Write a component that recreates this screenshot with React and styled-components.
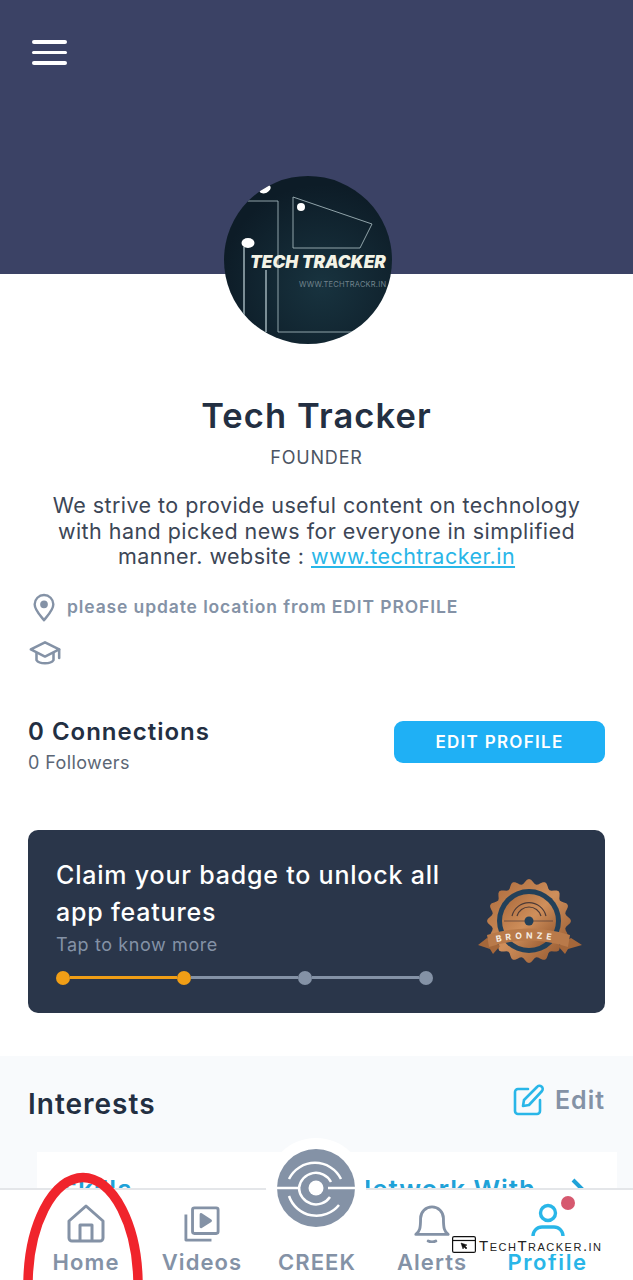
import React from "react";
import styled, { createGlobalStyle } from "styled-components";

const GlobalStyle = createGlobalStyle`
  html, body { margin: 0; padding: 0; background: #fff; }
  * { box-sizing: border-box; }
`;

const Page = styled.div`
  position: relative;
  width: 633px;
  height: 1280px;
  overflow: hidden;
  background: #fff;
  font-family: Inter, "Open Sans", sans-serif;
  color: #232f42;
`;

const Banner = styled.div`
  height: 274px;
  background: #3b4265;
  padding: 40px 32px;
`;

const Burger = styled.div`
  width: 35px;
  display: flex;
  flex-direction: column;
  gap: 7px;
  span {
    height: 3.5px;
    border-radius: 2px;
    background: #fff;
  }
`;

const AvatarWrap = styled.div`
  width: 168px;
  height: 168px;
  margin: -98px 0 0 224px;
  border-radius: 50%;
  overflow: hidden;
  position: relative;
`;

const Name = styled.h1`
  margin: 49px 0 0;
  font-size: 34.5px;
  line-height: 46px;
  font-weight: 600;
  letter-spacing: 1.1px;
  text-align: center;
  color: #232f42;
`;

const Role = styled.div`
  margin-top: 8px;
  font-size: 18px;
  line-height: 22px;
  letter-spacing: 0.8px;
  text-align: center;
  color: #4b5563;
`;

const Bio = styled.p`
  margin: 24px auto 0;
  width: 545px;
  font-size: 21.5px;
  line-height: 25.5px;
  letter-spacing: 0.45px;
  text-align: center;
  color: #3c4656;
  a { color: #29b6e8; }
`;

const InfoRow = styled.div`
  display: flex;
  align-items: center;
  gap: 7px;
  height: 30px;
  margin: ${(p) => p.$top}px 0 0 28px;
  font-size: 17.5px;
  font-weight: 600;
  letter-spacing: 0.88px;
  color: #8492a6;
`;

const StatsRow = styled.div`
  display: flex;
  justify-content: space-between;
  align-items: flex-start;
  margin: 49px 28px 0;
`;

const Connections = styled.div`
  font-size: 24px;
  line-height: 30px;
  font-weight: 600;
  letter-spacing: 1px;
  color: #232f42;
`;

const Followers = styled.div`
  margin-top: 5px;
  font-size: 18px;
  line-height: 22px;
  letter-spacing: 0.4px;
  color: #5b6675;
`;

const EditButton = styled.button`
  width: 211px;
  height: 42px;
  margin-top: 4px;
  border: none;
  border-radius: 9px;
  background: #1fb0f5;
  color: #fff;
  font-family: inherit;
  font-size: 17px;
  font-weight: 600;
  letter-spacing: 1.3px;
`;

const BadgeCard = styled.div`
  display: flex;
  justify-content: space-between;
  margin: 56px 28px 0;
  height: 183px;
  padding: 27px 23px 0 28px;
  border-radius: 10px;
  background: #2a364a;
`;

const BadgeTitle = styled.div`
  width: 410px;
  font-size: 25px;
  line-height: 37px;
  font-weight: 500;
  letter-spacing: 0.8px;
  color: #fff;
`;

const BadgeHint = styled.div`
  margin-top: 3px;
  font-size: 18px;
  line-height: 22px;
  letter-spacing: 0.6px;
  color: #8492a6;
`;

const Progress = styled.div`
  display: flex;
  align-items: center;
  width: 377px;
  margin-top: 15px;
`;

const Dot = styled.span`
  width: 14px;
  height: 14px;
  flex: none;
  border-radius: 50%;
  background: ${(p) => (p.$done ? "#f09e16" : "#8492a6")};
`;

const Line = styled.span`
  flex: 1;
  height: 3px;
  background: ${(p) => (p.$done ? "#f09e16" : "#8492a6")};
`;

const BadgeSlot = styled.div`
  margin-top: 21px;
`;

const Interests = styled.section`
  margin-top: 43px;
  height: 240px;
  padding: 0 28px;
  background: #f8fafc;
`;

const InterestsHead = styled.div`
  display: flex;
  justify-content: space-between;
  align-items: center;
  padding-top: 14px;
  height: 82px;
`;

const InterestsTitle = styled.h2`
  margin: 0;
  font-size: 28px;
  font-weight: 600;
  letter-spacing: 1px;
  color: #232f42;
`;

const EditLink = styled.div`
  display: flex;
  align-items: center;
  gap: 10px;
  margin-top: -7px;
  font-size: 25px;
  font-weight: 600;
  letter-spacing: 1px;
  color: #8492a6;
`;

const InterestTabs = styled.div`
  display: flex;
  align-items: flex-start;
  margin: 14px -12px 0 9px;
  height: 80px;
  padding: 23px 27px 0 23px;
  background: #fff;
  font-size: 26px;
  line-height: 30px;
  font-weight: 600;
  letter-spacing: 1px;
  color: #1fa2d8;
`;

const NetworkTab = styled.span`
  margin-left: auto;
  margin-right: 34px;
`;

const Chevron = styled.svg`
  margin-top: 2px;
`;

const BottomNav = styled.nav`
  position: absolute;
  left: 0;
  right: 0;
  bottom: 0;
  height: 92px;
  display: grid;
  grid-template-columns: 116px 116px 114px 116px 115px;
  padding: 0 0 0 28px;
  background: #fff;
  border-top: 2px solid #e4e6e9;
`;

const NavItem = styled.div`
  display: flex;
  flex-direction: column;
  align-items: center;
  justify-content: flex-end;
  gap: 6px;
  height: 85px;
  font-size: 22px;
  line-height: 26px;
  font-weight: 600;
  letter-spacing: ${(p) => (p.$active ? "1.6px" : "1.1px")};
  color: ${(p) => (p.$active ? "#29b6e8" : "#8492a6")};
`;

const CreekBump = styled.div`
  position: absolute;
  left: 266px;
  top: -52px;
  width: 100px;
  height: 100px;
  border-radius: 50%;
  background: #fff;
  display: flex;
  align-items: center;
  justify-content: center;
`;

const Notice = styled.span`
  position: absolute;
  left: 561px;
  top: 6px;
  width: 14px;
  height: 14px;
  border-radius: 50%;
  background: #d6596f;
`;

const Ring = styled.svg`
  position: absolute;
  left: 18px;
  top: 1168px;
`;

const Watermark = styled.div`
  position: absolute;
  left: 452px;
  top: 1236px;
  height: 17px;
  display: flex;
  align-items: center;
  gap: 3px;
  font-family: "Liberation Sans", sans-serif;
  font-size: 15px;
  line-height: 17px;
  font-variant: small-caps;
  letter-spacing: 1.5px;
  color: #222;
`;

const WatermarkText = styled.span`
  padding-top: 1px;
  background: #fff;
`;

const CreekLogo = ({ size, color = "#8492a6" }) => (
  <svg width={size} height={size} viewBox="-39 -39 78 78">
    <circle r="39" fill={color} />
    <g fill="none" stroke="#fff" strokeWidth="2.500">
      <path d="M-27 -9A29 29 0 0 1 25 -9" />
      <path d="M-27 8A29 29 0 0 0 23 17" />
      <path d="M-39 0H-17A17 17 0 0 1 15 -6" />
      <path d="M-17 0A17 17 0 0 0 14 9" />
      <path d="M12 0H39" />
    </g>
    <circle r="7.500" fill="#fff" />
  </svg>
);

const Avatar = () => (
  <svg width="168" height="168" viewBox="0 0 168 168">
    <defs>
      <radialGradient id="bg" cx="58%" cy="65%" r="60%">
        <stop offset="0" stopColor="#18333f" />
        <stop offset="1" stopColor="#0d1c27" />
      </radialGradient>
    </defs>
    <rect width="168" height="168" fill="url(#bg)" />
    <g fill="none" stroke="#9fb2b8" strokeWidth="0.9">
      <path d="M24 25H54V156H144" />
      <path d="M20 71V147" strokeWidth="1.500" />
      <path d="M42 94V156" strokeWidth="1.500" />
      <path d="M69 72V21L148 48L136 72Z" />
    </g>
    <g fill="#fff">
      <ellipse cx="41" cy="13" rx="6" ry="4" transform="rotate(-25 41 13)" />
      <circle cx="77" cy="31" r="4" />
      <ellipse cx="24" cy="67" rx="6.500" ry="5" />
    </g>
    <text
      x="26"
      y="92"
      fontFamily="Inter, sans-serif"
      fontSize="17.2"
      fontWeight="900"
      fontStyle="italic"
      fill="#f3f3e6"
    >
      TECH TRACKER
    </text>
    <text x="75" y="111" fontFamily="Inter, sans-serif" fontSize="7.500" letterSpacing="0.2" fill="#71838c">
      WWW.TECHTRACKR.IN
    </text>
  </svg>
);

// wavy seal outline around the badge centre
const sealPoints = Array.from({ length: 128 }, (_, i) => {
  const a = (i / 128) * Math.PI * 2;
  const r = 39.5 + 2.5 * Math.cos(a * 16);
  return `${51 + r * Math.cos(a)},${43 + r * Math.sin(a)}`;
}).join(" ");

const BronzeBadge = () => (
  <svg width="104" height="88" viewBox="0 0 104 88">
    <defs>
      <linearGradient id="bronze" x1="0" y1="0" x2="1" y2="1">
        <stop offset="0" stopColor="#a9683a" />
        <stop offset="0.5" stopColor="#cf8f5b" />
        <stop offset="1" stopColor="#8c5029" />
      </linearGradient>
    </defs>
    <polygon points={sealPoints} fill="url(#bronze)" />
    <circle cx="51" cy="43" r="32" fill="#234059" />
    <circle cx="51" cy="43" r="27" fill="url(#bronze)" />
    <g fill="none" stroke="#4d3a36" strokeWidth="1.200">
      <path d="M34 38a17.500 17.500 0 0 1 34 0" />
      <path d="M39 38a12.500 12.500 0 0 1 24 0" />
      <path d="M26 43H75" strokeWidth="0.700" />
    </g>
    <circle cx="51" cy="43" r="4.500" fill="#234059" />
    <path d="M9 60L0 67L12 71L15 76L22 68Z" fill="#a5673a" />
    <path d="M93 60L104 67L90 71L87 76L80 68Z" fill="#a5673a" />
    <path d="M9 57Q51 44 92 57L90 69Q51 56 11 69Z" fill="#b97a4a" />
    <path id="ribbon" d="M14 65Q51 56 88 65" fill="none" />
    <text fontFamily="Inter, sans-serif" fontSize="8.500" fontWeight="700" letterSpacing="4" fill="#f5efe6">
      <textPath href="#ribbon" startOffset="6%">BRONZE</textPath>
    </text>
  </svg>
);

export default function App() {
  return (
    <Page>
      <GlobalStyle />
      <Banner>
        <Burger>
          <span />
          <span />
          <span />
        </Burger>
      </Banner>
      <AvatarWrap>
        <Avatar />
      </AvatarWrap>
      <Name>Tech Tracker</Name>
      <Role>FOUNDER</Role>
      <Bio>
        We strive to provide useful content on technology with hand picked news for everyone in
        simplified manner. website : <a href="#site">www.techtracker.in</a>
      </Bio>
      <InfoRow $top={22}>
        <svg width="32" height="32" viewBox="0 0 24 24" fill="none" stroke="#8492a6" strokeWidth="1.800" strokeLinecap="round" strokeLinejoin="round">
          <path d="M12 22c-1-2-7-7-7-12a7 7 0 0 1 14 0c0 5-6 10-7 12z" />
          <circle cx="12" cy="10" r="2" fill="#8492a6" />
        </svg>
        please update location from EDIT PROFILE
      </InfoRow>
      <InfoRow $top={16}>
        <svg width="34" height="34" viewBox="0 0 24 24" fill="none" stroke="#8492a6" strokeWidth="1.800" strokeLinecap="round" strokeLinejoin="round">
          <path d="M2 9.500l10-5 10 5-10 5z" />
          <path d="M6 12v5c2 3 10 3 12 0v-5M22 9.500v6" />
        </svg>
      </InfoRow>
      <StatsRow>
        <div>
          <Connections>0 Connections</Connections>
          <Followers>0 Followers</Followers>
        </div>
        <EditButton>EDIT PROFILE</EditButton>
      </StatsRow>
      <BadgeCard>
        <div>
          <BadgeTitle>Claim your badge to unlock all app features</BadgeTitle>
          <BadgeHint>Tap to know more</BadgeHint>
          <Progress>
            <Dot $done />
            <Line $done />
            <Dot $done />
            <Line />
            <Dot />
            <Line />
            <Dot />
          </Progress>
        </div>
        <BadgeSlot>
          <BronzeBadge />
        </BadgeSlot>
      </BadgeCard>
      <Interests>
        <InterestsHead>
          <InterestsTitle>Interests</InterestsTitle>
          <EditLink>
            <svg width="32" height="32" viewBox="0 0 32 32" fill="none" stroke="#29b6e8" strokeWidth="2.600" strokeLinecap="round" strokeLinejoin="round">
              <path d="M15 5H5a3 3 0 0 0-3 3v19a3 3 0 0 0 3 3h19a3 3 0 0 0 3-3V16" />
              <path d="M24 3a3 3 0 0 1 5 4L16 21l-6 1 1-6z" />
            </svg>
            Edit
          </EditLink>
        </InterestsHead>
        <InterestTabs>
          <span>Skills</span>
          <NetworkTab>Network With</NetworkTab>
          <Chevron width="20" height="32" viewBox="0 0 20 32" fill="none" stroke="#1fa2d8" strokeWidth="4">
            <path d="M3 3l13 13L3 29" />
          </Chevron>
        </InterestTabs>
      </Interests>
      <BottomNav>
        <NavItem>
          <svg width="38" height="40" viewBox="0 0 38 40" fill="none" stroke="#8492a6" strokeWidth="3" strokeLinejoin="round">
            <path d="M2 18L19 3l17 15v17a3 3 0 0 1-3 3H5a3 3 0 0 1-3-3z" />
            <path d="M13 38V22h12v16" />
          </svg>
          Home
        </NavItem>
        <NavItem>
          <svg width="36" height="38" viewBox="0 0 38 38" fill="none" stroke="#8492a6" strokeWidth="3" strokeLinejoin="round">
            <rect x="9" y="2" width="27" height="27" rx="2" />
            <path d="M2 9v27h27" />
            <path d="M18 9l10 6.500-10 6.500z" fill="#8492a6" />
          </svg>
          Videos
        </NavItem>
        <NavItem>CREEK</NavItem>
        <NavItem>
          <svg width="38" height="40" viewBox="0 0 38 42" fill="none" stroke="#8492a6" strokeWidth="3" strokeLinecap="round" strokeLinejoin="round">
            <path d="M2 33c4-3 5-6 5-17a12 12 0 0 1 24 0c0 11 1 14 5 17z" />
            <path d="M15 40q4 2 8 0" />
          </svg>
          Alerts
        </NavItem>
        <NavItem $active>
          <svg width="36" height="40" viewBox="0 0 36 40" fill="none" stroke="#29b6e8" strokeWidth="3.400" strokeLinecap="round">
            <circle cx="18" cy="10" r="7.500" />
            <path d="M3 38v-5a9 9 0 0 1 9-9h12a9 9 0 0 1 9 9v5" />
          </svg>
          Profile
        </NavItem>
        <CreekBump>
          <CreekLogo size={78} />
        </CreekBump>
        <Notice />
      </BottomNav>
      <Ring width="128" height="112" viewBox="0 0 128 112">
        <ellipse cx="65" cy="117.500" rx="55" ry="108" fill="none" stroke="#f0242c" strokeWidth="9.500" />
      </Ring>
      <Watermark>
        <svg width="24" height="17" viewBox="0 0 24 17" fill="#fff" stroke="#111" strokeWidth="1.200">
          <rect x="0.600" y="0.600" width="22.800" height="15.800" rx="1.500" />
          <path d="M1 4.500h22" />
          <path d="M9 7l6 2-2 1 2 2-1 1-2-2-1 2z" fill="#111" strokeWidth="0.500" />
        </svg>
        <WatermarkText>TechTracker.in</WatermarkText>
      </Watermark>
    </Page>
  );
}
